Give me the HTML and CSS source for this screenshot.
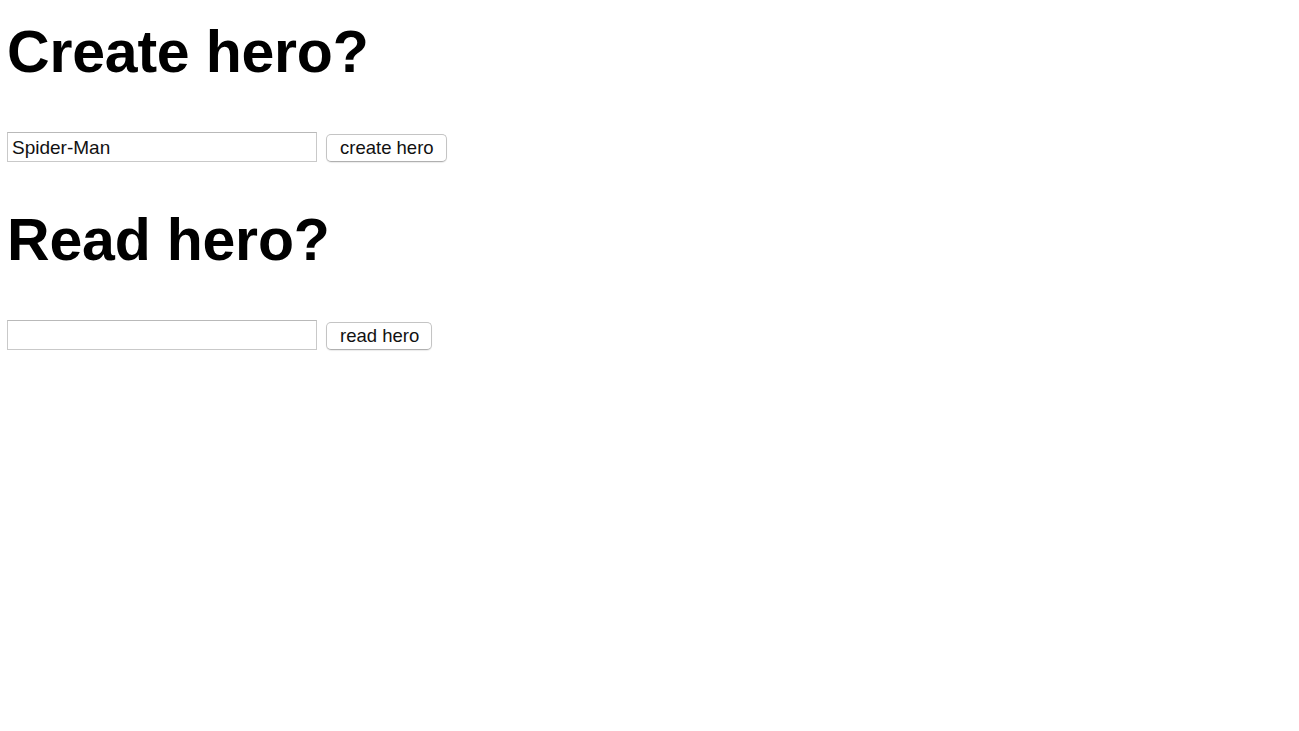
FILE: index.html
```html
<html>
  <head>
    <title>Heroes</title>
    <link rel="stylesheet" href="styles.css">
  </head>
  <body>
    <div class="container">
      <h1>Create hero?</h1>
      <div class="row">
        <input id="create-name" type="text" value="Spider-Man"><button id="create-btn">create hero</button>
      </div>

      <h1>Read hero?</h1>
      <div class="row">
        <input id="read-name" type="text"><button id="read-btn">read hero</button>
      </div>
    </div>
  </body>
</html>
```

FILE: styles.css
```css
body {
  background: #fff;
  color: #000;
  margin: 0;
  font-family: "Liberation Sans", Arial, sans-serif;
}
.container {
  padding: 17px 7px 0;
}
h1 {
  font-size: 59px;
  line-height: 70px;
  font-weight: 700;
  letter-spacing: -0.2px;
  margin: 0 0 45px;
}
.row {
  display: flex;
  align-items: flex-end;
  gap: 9px;
  margin-bottom: 43px;
}
input[type="text"] {
  box-sizing: border-box;
  width: 310px;
  height: 30px;
  margin: 0;
  padding: 1px 4px 0;
  border: 1px solid #c9c9c9;
  border-top-color: #b9b9b9;
  font-family: "Liberation Sans", Arial, sans-serif;
  font-size: 19px;
  color: #111;
  background: #fff;
  outline: none;
}
button {
  box-sizing: border-box;
  height: 28px;
  margin: 0;
  padding: 0 12px 0 13px;
  border: 1px solid #c4c4c4;
  border-bottom-color: #b0b0b0;
  border-radius: 5px;
  background: #fff;
  box-shadow: 0 1px 1px rgba(0, 0, 0, 0.08);
  font-family: "Liberation Sans", Arial, sans-serif;
  font-size: 18.5px;
  color: #111;
  cursor: pointer;
}
```
